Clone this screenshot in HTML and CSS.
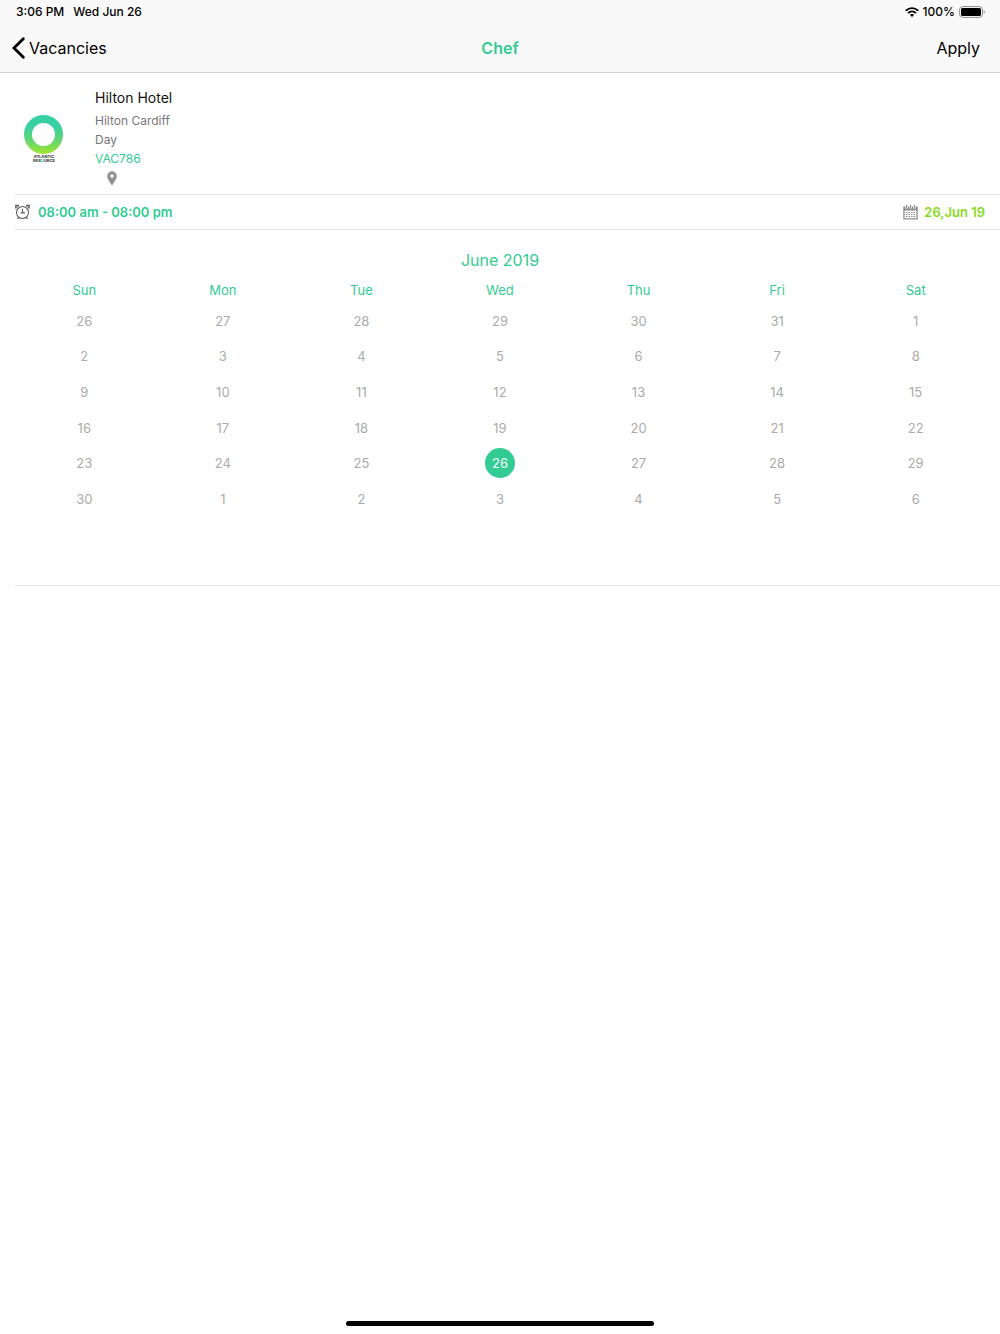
FILE: index.html
```html
<!DOCTYPE html>
<html lang="en">
<head>
<meta charset="utf-8">
<meta name="viewport" content="width=device-width, initial-scale=1">
<title>Chef</title>
<link rel="stylesheet" href="styles.css">
</head>
<body>
<header class="top">
  <div class="status">
    <div class="status-group status-left"><span>3:06 PM</span><span>Wed Jun 26</span></div>
    <div class="status-group">
      <svg class="wifi" viewBox="0 0 14 10" aria-hidden="true"><g fill="none" stroke="#000" stroke-width="1.9"><path d="M.8 3.700C4.300.3 9.700.3 13.200 3.700"/><path d="M3.100 6.100C5.300 4 8.700 4 10.900 6.100"/></g><path d="M4.900 7.800Q7 6.100 9.100 7.800L7 10z"/></svg>
      <span>100%</span>
      <svg class="battery" viewBox="0 0 26 12" aria-hidden="true"><rect x=".6" y=".6" width="22.800" height="10.800" rx="3" fill="none" stroke="#8e8e8e"/><rect x="2" y="2" width="20" height="8" rx="1.600"/><path d="M24.600 4.200q1.200.4 1.200 1.800t-1.200 1.800z" fill="#8e8e8e"/></svg>
    </div>
  </div>
  <nav class="nav">
    <a class="back" href="#"><svg class="chevron" viewBox="0 0 13 22" aria-hidden="true"><path d="M11.300 1.800L2 11l9.300 9.200" fill="none" stroke="#000" stroke-width="2.800" stroke-linecap="round"/></svg>Vacancies</a>
    <h1 class="title">Chef</h1>
    <button class="apply" type="button">Apply</button>
  </nav>
</header>
<main class="content">
  <section class="job">
    <svg class="logo" viewBox="0 0 50 54" role="img" aria-label="Atlantic Resource">
      <defs><linearGradient id="ring" x1="0" y1="0" x2="0" y2="1"><stop offset=".3" stop-color="#36d0a2"/><stop offset=".65" stop-color="#62d772"/><stop offset="1" stop-color="#a0e52c"/></linearGradient></defs>
      <path fill="url(#ring)" fill-rule="evenodd" d="M23.500 2a19.500 19.500 0 1 0 0 39a19.500 19.500 0 1 0 0-39zm0 8a11.500 11.500 0 1 1 0 23a11.500 11.500 0 1 1 0-23z"/>
      <text class="logo-text" x="24" y="45" text-anchor="middle">ATLANTIC</text>
      <text class="logo-text" x="24" y="49" text-anchor="middle">RES<tspan fill="#36d0a2">O</tspan>URCE</text>
    </svg>
    <div class="details">
      <h2 class="hotel">Hilton Hotel</h2>
      <p class="line">Hilton Cardiff</p>
      <p class="line">Day</p>
      <p class="line code">VAC786</p>
      <svg class="pin" viewBox="0 0 10 15" aria-hidden="true"><path fill="#929292" fill-rule="evenodd" d="M5 .3A4.700 4.700 0 0 0 .2 5C.2 8 2.500 10.500 5 14.700C7.500 10.500 9.800 8 9.800 5A4.700 4.700 0 0 0 5 .3zm0 2.900a1.800 1.800 0 1 1 0 3.600a1.800 1.800 0 1 1 0-3.600z"/></svg>
    </div>
  </section>
  <section class="shift">
    <div class="shift-part">
      <svg class="clock" viewBox="0 0 15 16" aria-hidden="true"><g fill="none" stroke="#606060"><circle cx="7.500" cy="8.500" r="6" stroke-width="1.100"/><path d="M7.500 4.800v4M5.500 8.800h4.500" stroke-width="1.200"/><path d="M3.500 13.300l-1 1.700M11.500 13.300l1 1.700M.8 4.600V1.500H4M14.200 4.600V1.500H11" stroke-width="1.300"/><path d="M.8 4.300L4 1.500M14.200 4.300L11 1.500" stroke-width=".8"/></g></svg>
      <span>08:00 am - 08:00 pm</span>
    </div>
    <div class="shift-part date">
      <svg class="cal-icon" viewBox="0 0 15 16" aria-hidden="true"><path fill="#8c8c8c" fill-rule="evenodd" d="M.3 2.500h2v2h2.400v-2h1.600v2h2.400v-2h1.600v2h2.400v-2h2V15.500H.3zM1.600 6.500v7.800h11.800V6.500z"/><path d="M3.500.8v3M7.500.8v3M11.500.8v3" stroke="#8c8c8c" stroke-width="1.200"/><path d="M2.700 8.500h9.600M2.700 10.500h9.600M2.700 12.500h9.600" stroke="#8c8c8c" stroke-width="1.200" stroke-dasharray="1.600 1"/></svg>
      <span>26,Jun 19</span>
    </div>
  </section>
  <section class="calendar">
    <table class="month">
      <caption>June 2019</caption>
      <thead><tr><th>Sun</th><th>Mon</th><th>Tue</th><th>Wed</th><th>Thu</th><th>Fri</th><th>Sat</th></tr></thead>
      <tbody>
        <tr><td>26</td><td>27</td><td>28</td><td>29</td><td>30</td><td>31</td><td>1</td></tr>
        <tr><td>2</td><td>3</td><td>4</td><td>5</td><td>6</td><td>7</td><td>8</td></tr>
        <tr><td>9</td><td>10</td><td>11</td><td>12</td><td>13</td><td>14</td><td>15</td></tr>
        <tr><td>16</td><td>17</td><td>18</td><td>19</td><td>20</td><td>21</td><td>22</td></tr>
        <tr><td>23</td><td>24</td><td>25</td><td><span class="selected">26</span></td><td>27</td><td>28</td><td>29</td></tr>
        <tr><td>30</td><td>1</td><td>2</td><td>3</td><td>4</td><td>5</td><td>6</td></tr>
      </tbody>
    </table>
  </section>
</main>
<footer class="home"><div class="home-bar"></div></footer>
</body>
</html>
```
FILE: styles.css
```css
* { box-sizing: border-box; }
body {
  margin: 0;
  min-height: 100vh;
  display: flex;
  flex-direction: column;
  background: #fff;
  color: #111;
  font-family: Inter, "Liberation Sans", sans-serif;
}
h1, h2, p { margin: 0; font-weight: 400; }
svg { display: block; flex: none; }
.top { background: #f9f9f9; border-bottom: 1px solid #d2d2d2; }
.status {
  display: flex;
  justify-content: space-between;
  height: 24px;
  padding: 0 15px 0 16px;
  font-size: 12px;
  line-height: 16px;
  font-weight: 500;
  color: #000;
}
.status-group { display: flex; align-items: center; gap: 4px; }
.status-left { gap: 9px; }
.wifi { width: 14px; height: 10px; }
.battery { width: 26px; height: 12px; }
.nav {
  display: grid;
  grid-template-columns: 1fr auto 1fr;
  align-items: center;
  height: 48px;
  padding: 0 12px;
  font-size: 16px;
}
.back { display: flex; align-items: center; gap: 4px; color: #000; text-decoration: none; }
.chevron { width: 13px; height: 22px; }
.title { font-size: 16px; font-weight: 600; color: #32cb93; }
.apply { justify-self: end; padding: 0 8px; border: 0; background: none; font: inherit; color: #000; }
.content { flex: 1; padding-left: 15px; }
.job {
  display: flex;
  align-items: center;
  height: 122px;
  padding-top: 3px;
  border-bottom: 1px solid #e3e3e3;
}
.logo { width: 50px; height: 54px; margin: 10px 25px 0 5px; }
.logo-text { font-size: 4px; font-weight: 800; fill: #444; }
.hotel { font-size: 14px; line-height: 26px; }
.line { font-size: 12px; line-height: 19px; color: #777; }
.code { color: #32cb93; }
.pin { width: 10px; height: 15px; margin: 3px 0 0 12px; }
.shift {
  display: flex;
  justify-content: space-between;
  height: 35px;
  padding-right: 15px;
  border-bottom: 1px solid #e3e3e3;
  font-size: 13px;
  font-weight: 600;
  color: #32cb93;
}
.shift-part { display: flex; align-items: center; gap: 8px; }
.date { gap: 6px; color: #86dc1c; }
.clock, .cal-icon { width: 15px; height: 16px; }
.calendar { padding: 14px 15px 68px 0; border-bottom: 1px solid #e3e3e3; }
.month { width: 100%; height: 241px; table-layout: fixed; border-collapse: collapse; font-size: 13px; }
.month caption { font-size: 16px; line-height: 32px; color: #32cb93; }
.month th { height: 27px; padding: 0; font-weight: 400; color: #32cb93; }
.month td { height: 35px; padding: 0; text-align: center; color: #aaa; }
.selected {
  display: grid;
  place-items: center;
  width: 30px;
  height: 30px;
  margin: 0 auto;
  border-radius: 50%;
  background: #32cb93;
  color: #fff;
}
.home { display: flex; justify-content: center; padding-bottom: 8px; }
.home-bar { width: 308px; height: 5px; border-radius: 3px; background: #000; }
```
